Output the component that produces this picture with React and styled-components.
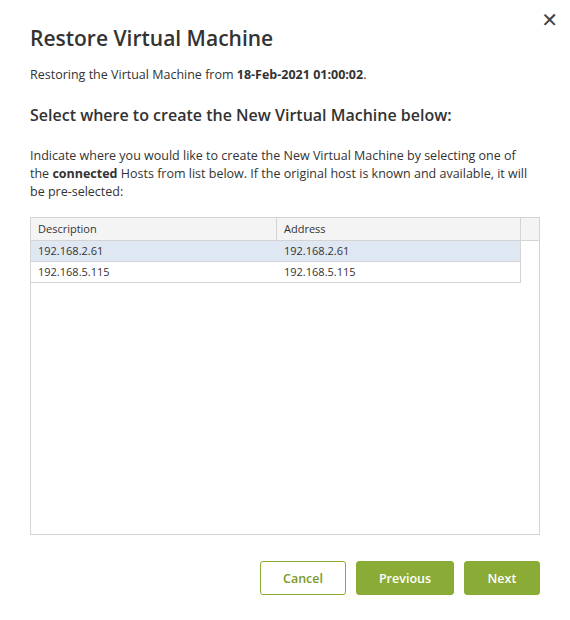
import React from "react";
import styled, { createGlobalStyle } from "styled-components";

const Global = createGlobalStyle`
  html, body { margin: 0; padding: 0; background: #fff; }
  body { font-family: "Open Sans", "Liberation Sans", sans-serif; color: #333; }
`;

const Dialog = styled.div`
  position: relative;
  width: 570px;
  height: 620px;
  box-sizing: border-box;
  padding: 22px 30px 0 30px;
  display: flex;
  flex-direction: column;
`;
const Close = styled.button`
  position: absolute;
  top: 8px;
  right: 12px;
  border: none;
  background: none;
  font-size: 20px;
  font-weight: 700;
  color: #444;
  padding: 0;
  cursor: pointer;
  font-family: "DejaVu Sans", sans-serif;
`;
const Title = styled.h1`
  margin: 0;
  font-size: 21px;
  font-weight: 600;
  color: #333;
  line-height: 32px;
`;
const Text = styled.p`
  margin: ${(p) => p.$m || "0"};
  max-width: ${(p) => p.$w || "none"};
  font-size: 12.5px;
  line-height: 18px;
  color: #333;
`;
const Heading = styled.h2`
  margin: 20px 0 0 0;
  font-size: 16px;
  font-weight: 600;
  line-height: 22px;
  color: #333;
`;
const Table = styled.div`
  margin-top: 16px;
  height: 318px;
  border: 1px solid #d4d4d4;
  box-sizing: border-box;
`;
const Row = styled.div`
  display: grid;
  grid-template-columns: 246px 244px 18px;
  height: ${(p) => (p.$head ? "23px" : "21px")};
`;
const Cell = styled.div`
  font-size: 11px;
  line-height: ${(p) => (p.$head ? "22px" : "20px")};
  padding-left: 7px;
  color: #333;
  background: ${(p) => (p.$head ? "#f4f4f4" : p.$sel ? "#dfe7f2" : "#fff")};
  border-right: ${(p) => (p.$line ? "1px solid #d4d4d4" : "none")};
  border-bottom: ${(p) => (p.$blank ? "none" : "1px solid #d4d4d4")};
`;
const Footer = styled.div`
  display: flex;
  justify-content: flex-end;
  gap: 10px;
  margin-top: 26px;
`;
const Button = styled.button`
  height: 34px;
  width: ${(p) => p.$w}px;
  border-radius: 3px;
  font-family: "Open Sans", "Liberation Sans", sans-serif;
  font-size: 12.5px;
  font-weight: 600;
  border: 1px solid #8aab35;
  background: ${(p) => (p.$outline ? "#fff" : "#8aab35")};
  color: ${(p) => (p.$outline ? "#7a9a2a" : "#fff")};
`;

const rows = [
  ["192.168.2.61", "192.168.2.61", true],
  ["192.168.5.115", "192.168.5.115", false],
];

export default function App() {
  return (
    <>
      <Global />
      <Dialog>
        <Close>✕</Close>
        <Title>Restore Virtual Machine</Title>
        <Text $m="12px 0 0 0">
          Restoring the Virtual Machine from <b>18-Feb-2021 01:00:02</b>.
        </Text>
        <Heading>Select where to create the New Virtual Machine below:</Heading>
        <Text $m="21px 0 0 0" $w="508px">
          Indicate where you would like to create the New Virtual Machine by selecting one of the{" "}
          <b>connected</b> Hosts from list below. If the original host is known and available, it
          will be pre-selected:
        </Text>
        <Table>
          <Row $head>
            <Cell $head $line>Description</Cell>
            <Cell $head $line>Address</Cell>
            <Cell $head />
          </Row>
          {rows.map(([d, a, s]) => (
            <Row key={d}>
              <Cell $sel={s}>{d}</Cell>
              <Cell $sel={s} $line>{a}</Cell>
              <Cell $blank />
            </Row>
          ))}
        </Table>
        <Footer>
          <Button $outline $w={86}>Cancel</Button>
          <Button $w={98}>Previous</Button>
          <Button $w={76}>Next</Button>
        </Footer>
      </Dialog>
    </>
  );
}
